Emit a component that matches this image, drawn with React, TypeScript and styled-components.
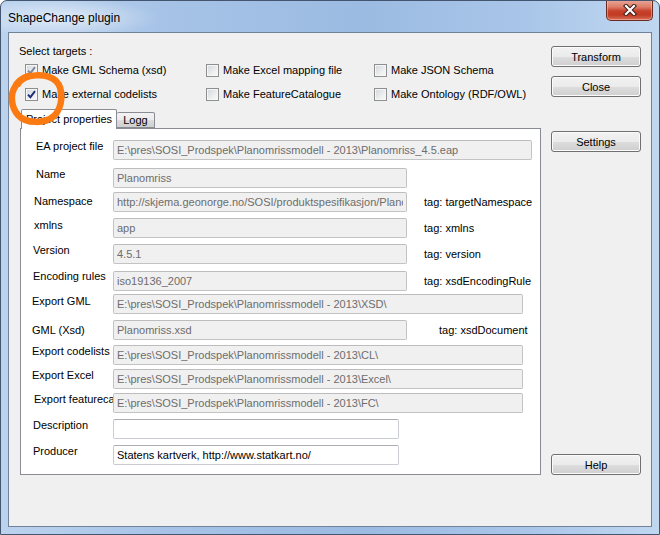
import React from "react";
import styled, { createGlobalStyle } from "styled-components";

const GlobalStyle = createGlobalStyle`
  html, body {
    margin: 0;
    padding: 0;
    background: #ffffff;
  }
  body {
    font-family: "Liberation Sans", Arial, sans-serif;
    font-size: 11px;
    color: #000;
  }
`;

type Field = {
  label: string;
  value: string;
  top: number;
  labelX: number;
  labelY: number;
  width: number;
  tag?: string;
  tagGap?: number;
  editable?: boolean;
};

const base = "E:\\pres\\SOSI_Prodspek\\Planomrissmodell - 2013\\";

const fields: Field[] = [
  { label: "EA project file", value: base + "Planomriss_4.5.eap", top: 0, labelX: 15, labelY: 0, width: 419 },
  { label: "Name", value: "Planomriss", top: 8, labelX: 15, labelY: 0, width: 294 },
  {
    label: "Namespace",
    value: "http://skjema.geonorge.no/SOSI/produktspesifikasjon/Planomriss/4.5",
    top: 4,
    labelX: 13,
    labelY: 3,
    width: 294,
    tag: "tag: targetNamespace",
    tagGap: 17,
  },
  { label: "xmlns", value: "app", top: 6, labelX: 13, labelY: 1, width: 294, tag: "tag: xmlns", tagGap: 17 },
  { label: "Version", value: "4.5.1", top: 6, labelX: 12, labelY: 0, width: 294, tag: "tag: version", tagGap: 17 },
  {
    label: "Encoding rules",
    value: "iso19136_2007",
    top: 7,
    labelX: 12,
    labelY: -1,
    width: 294,
    tag: "tag: xsdEncodingRule",
    tagGap: 17,
  },
  { label: "Export GML", value: base + "XSD\\", top: 3, labelX: 11, labelY: 1, width: 410 },
  {
    label: "GML (Xsd)",
    value: "Planomriss.xsd",
    top: 6,
    labelX: 11,
    labelY: 4,
    width: 294,
    tag: "tag: xsdDocument",
    tagGap: 32,
  },
  { label: "Export codelists", value: base + "CL\\", top: 5, labelX: 11, labelY: 0, width: 410 },
  { label: "Export Excel", value: base + "Excel\\", top: 4, labelX: 11, labelY: 0, width: 410 },
  // label is cut by the text box in the original dialog too
  { label: "Export featurecatalogue", value: base + "FC\\", top: 4, labelX: 13, labelY: 0, width: 410 },
  { label: "Description", value: "", top: 6, labelX: 12, labelY: 0, width: 286, editable: true },
  {
    label: "Producer",
    value: "Statens kartverk, http://www.statkart.no/",
    top: 6,
    labelX: 12,
    labelY: 0,
    width: 286,
    editable: true,
  },
];

const targets = [
  { label: "Make GML Schema (xsd)", checked: true, disabled: true },
  { label: "Make Excel mapping file" },
  { label: "Make JSON Schema" },
  { label: "Make external codelists", checked: true },
  { label: "Make FeatureCatalogue" },
  { label: "Make Ontology (RDF/OWL)" },
];

function CheckBox({ checked, disabled }: { checked?: boolean; disabled?: boolean }) {
  return (
    <Box>
      {checked && (
        <svg width="9" height="9" viewBox="0 0 9 9">
          <path
            d="M1 4.6 L3.4 7.2 L8 1.2"
            fill="none"
            stroke={disabled ? "#7d8796" : "#1c2f7a"}
            strokeWidth="1.9"
          />
        </svg>
      )}
    </Box>
  );
}

export default function App(): React.ReactElement {
  return (
    <>
      <GlobalStyle />
      <Window>
        <TitleBar>
          <Title>ShapeChange plugin</Title>
          <CloseButton>
            <svg width="14" height="12" viewBox="0 0 14 12">
              <path d="M3 2 L11 10 M11 2 L3 10" stroke="#3b1c17" strokeWidth="4.2" strokeLinecap="square" />
              <path d="M3 2 L11 10 M11 2 L3 10" stroke="#ffffff" strokeWidth="2.2" strokeLinecap="square" />
            </svg>
          </CloseButton>
        </TitleBar>
        <Client>
          <MainColumn>
            <Heading>Select targets :</Heading>
            <TargetGrid>
              {targets.map((t) => (
                <Target key={t.label}>
                  <CheckBox checked={t.checked} disabled={t.disabled} />
                  <span>{t.label}</span>
                </Target>
              ))}
            </TargetGrid>
            <TabStrip>
              <Tab $active $width={96}>
                Project properties
              </Tab>
              <Tab $width={38}>Logg</Tab>
            </TabStrip>
            <Panel>
              {fields.map((f) => (
                <Row key={f.label} $top={f.top}>
                  <Label $x={f.labelX} $y={f.labelY}>
                    {f.label}
                  </Label>
                  <TextBox
                    readOnly
                    $width={f.width}
                    $editable={f.editable}
                    defaultValue={f.value}
                  />
                  {f.tag && <Tag $gap={f.tagGap ?? 17}>{f.tag}</Tag>}
                </Row>
              ))}
            </Panel>
          </MainColumn>
          <ButtonColumn>
            <Button $top={13}>Transform</Button>
            <Button $top={9}>Close</Button>
            <Button $top={34}>Settings</Button>
            <HelpButton>Help</HelpButton>
          </ButtonColumn>
        </Client>
        {/* hand-drawn orange ring from the screenshot */}
        <Annotation width="80" height="130" viewBox="0 0 80 130">
          <path
            d="M18 84 C24 74, 46 72, 56 81 C64 89, 63 107, 54 116 C45 124, 26 124, 18 115 C11 107, 10 94, 15 87 C17 82, 22 78, 28 76"
            fill="none"
            stroke="#fb7a12"
            strokeWidth="6.5"
            strokeLinecap="round"
          />
        </Annotation>
      </Window>
    </>
  );
}

const Window = styled.div`
  position: relative;
  width: 660px;
  height: 535px;
  box-sizing: border-box;
  display: flex;
  flex-direction: column;
  border: 1px solid #44566f;
  border-radius: 7px 7px 0 0;
  overflow: hidden;
  background: linear-gradient(
    90deg,
    #bcd3ee 0%,
    #a6c3e7 25%,
    #9cbbe2 55%,
    #a9c6e9 80%,
    #c0d7f0 100%
  );
`;

const TitleBar = styled.div`
  height: 31px;
  display: flex;
  align-items: flex-start;
  padding-left: 7px;
  background: radial-gradient(
    ellipse 95px 20px at 62px 17px,
    rgba(255, 255, 255, 0.6),
    rgba(255, 255, 255, 0) 100%
  );
`;

const Title = styled.div`
  margin-top: 10px;
  font-size: 12px;
  line-height: 15px;
  color: #000;
`;

const CloseButton = styled.div`
  margin-left: auto;
  margin-right: 6px;
  margin-top: -1px;
  width: 47px;
  height: 21px;
  box-sizing: border-box;
  display: flex;
  align-items: center;
  justify-content: center;
  border: 1px solid #6a2b22;
  border-top: none;
  border-radius: 0 0 5px 5px;
  background: linear-gradient(
    #e9a99b 0%,
    #dd7c67 35%,
    #c7412a 55%,
    #c23a22 75%,
    #d97058 100%
  );
  box-shadow: inset 0 0 0 1px rgba(255, 210, 200, 0.45);
`;

const Client = styled.div`
  flex: 1;
  margin: 0 7px 7px 7px;
  display: flex;
  border: 1px solid #71839b;
  background: #f0f0f0;
  padding-bottom: 51px;
`;

const MainColumn = styled.div`
  width: 532px;
  box-sizing: border-box;
  padding-left: 10px;
  display: flex;
  flex-direction: column;
`;

const Heading = styled.div`
  margin-top: 12px;
  line-height: 13px;
`;

const TargetGrid = styled.div`
  margin-top: 6px;
  margin-left: 6px;
  display: grid;
  grid-template-columns: 181px 168px 1fr;
  row-gap: 11px;
`;

const Target = styled.label`
  display: flex;
  align-items: center;
  gap: 4px;
  height: 13px;
  line-height: 13px;
  white-space: nowrap;
`;

const Box = styled.span`
  width: 13px;
  height: 13px;
  box-sizing: border-box;
  flex: none;
  display: flex;
  align-items: center;
  justify-content: center;
  border: 1px solid #8e8f8f;
  background: linear-gradient(135deg, #d3d6da 0%, #eceef0 60%, #fafafa 100%);
  box-shadow: inset 0 0 0 1px #f6f6f6;
`;

const TabStrip = styled.div`
  margin-top: 8px;
  margin-left: 2px;
  height: 20px;
  display: flex;
  align-items: flex-end;
  position: relative;
  z-index: 1;
  margin-bottom: -1px;
`;

const Tab = styled.div<{ $active?: boolean; $width: number }>`
  width: ${(p) => p.$width}px;
  box-sizing: border-box;
  height: ${(p) => (p.$active ? 20 : 16)}px;
  margin-bottom: ${(p) => (p.$active ? 0 : 1)}px;
  border: 1px solid #898c95;
  border-bottom: ${(p) => (p.$active ? "none" : "1px solid #898c95")};
  border-left: ${(p) => (p.$active ? "1px solid #898c95" : "none")};
  border-radius: 2px 2px 0 0;
  background: ${(p) =>
    p.$active
      ? "#ffffff"
      : "linear-gradient(#f3f3f3 0%, #ebebeb 50%, #dddddd 51%, #cfcfcf 100%)"};
  text-align: center;
  line-height: ${(p) => (p.$active ? 19 : 14)}px;
  white-space: nowrap;
`;

const Panel = styled.div`
  flex: 1;
  margin-left: 1px;
  border: 1px solid #898c95;
  background: #ffffff;
  padding-top: 11px;
  display: flex;
  flex-direction: column;
`;

const Row = styled.div<{ $top: number }>`
  display: flex;
  align-items: flex-start;
  height: 20px;
  margin-top: ${(p) => p.$top}px;
`;

const Label = styled.div<{ $x: number; $y: number }>`
  width: 92px;
  box-sizing: border-box;
  flex: none;
  padding-left: ${(p) => p.$x}px;
  margin-top: ${(p) => p.$y}px;
  line-height: 13px;
  white-space: nowrap;
  overflow: hidden;
`;

const TextBox = styled.input<{ $width: number; $editable?: boolean }>`
  width: ${(p) => p.$width}px;
  height: 20px;
  box-sizing: border-box;
  flex: none;
  margin: 0;
  padding: 0 3px;
  border: 1px solid ${(p) => (p.$editable ? "#c9ccd1" : "#c3c3c3")};
  border-top-color: ${(p) => (p.$editable ? "#abadb3" : "#bdbdbd")};
  border-radius: 2px;
  background: ${(p) => (p.$editable ? "#ffffff" : "#f0f0f0")};
  color: ${(p) => (p.$editable ? "#000000" : "#6d6d6d")};
  font-family: "Liberation Sans", Arial, sans-serif;
  font-size: 11px;
  outline: none;
`;

const Tag = styled.div<{ $gap: number }>`
  margin-left: ${(p) => p.$gap}px;
  align-self: center;
  line-height: 13px;
  white-space: nowrap;
`;

const ButtonColumn = styled.div`
  width: 90px;
  margin-left: 10px;
  display: flex;
  flex-direction: column;
`;

const Button = styled.button<{ $top?: number }>`
  width: 90px;
  height: 21px;
  box-sizing: border-box;
  margin: ${(p) => p.$top ?? 0}px 0 0 0;
  padding: 0;
  border: 1px solid #707070;
  border-radius: 3px;
  background: linear-gradient(#f2f2f2 0%, #ebebeb 50%, #dddddd 51%, #cfcfcf 100%);
  box-shadow: inset 0 0 0 1px #fbfbfb;
  font-family: "Liberation Sans", Arial, sans-serif;
  font-size: 11px;
  color: #000;
`;

const HelpButton = styled(Button)`
  margin-top: auto;
`;

const Annotation = styled.svg`
  position: absolute;
  left: -1px;
  top: -1px;
  z-index: 2;
  pointer-events: none;
`;
